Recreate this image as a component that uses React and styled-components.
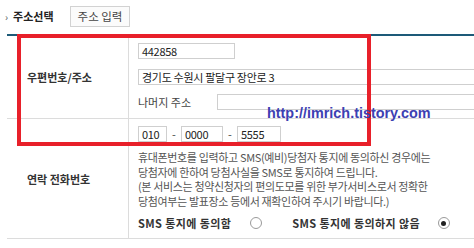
import React from "react";
import styled, { createGlobalStyle } from "styled-components";

const GlobalStyle = createGlobalStyle`
  html, body {
    margin: 0;
    padding: 0;
    background: #fff;
  }
  body {
    font-family: "Noto Sans CJK KR", "Liberation Sans", sans-serif;
    color: #333;
  }
`;

const KR = `"Noto Sans CJK KR", "Liberation Sans", sans-serif`;

const Page = styled.div`
  position: relative;
  width: 474px;
  height: 248px;
  overflow: hidden;
`;

const Header = styled.div`
  display: flex;
  align-items: center;
  height: 34px;
  padding-left: 5px;
  box-sizing: border-box;
  padding-bottom: 2px;
`;

const Title = styled.div`
  display: flex;
  align-items: center;
  font-family: ${KR};
  font-size: 11px;
  font-weight: 700;
  color: #222;
  width: 65px;
`;

const Chevron = styled.span`
  font-size: 10px;
  font-weight: 400;
  color: #555;
  margin-right: 5px;
`;

const SmallButton = styled.button`
  height: 21px;
  width: 60px;
  padding: 0;
  border: 1px solid #d2d2d2;
  background: #fbfbfb;
  font-family: ${KR};
  font-size: 11.5px;
  color: #444;
`;

const Table = styled.div`
  margin-left: 7px;
  border-top: 2px solid #1d5a78;
  display: grid;
  grid-template-columns: 122px 1fr;
`;

const Label = styled.div`
  display: flex;
  align-items: center;
  padding-left: 20px;
  border-right: 1px solid #dcdcdc;
  border-bottom: 1px solid #dcdcdc;
  font-family: ${KR};
  font-size: 11px;
  font-weight: 700;
  color: #333;
  height: ${(p) => p.h}px;
  box-sizing: border-box;
`;

const Cell = styled.div`
  border-bottom: 1px solid #dcdcdc;
  padding: ${(p) => p.pad};
  overflow: hidden;
  height: ${(p) => p.h}px;
  box-sizing: border-box;
`;

const Line = styled.div`
  display: flex;
  align-items: center;
  margin-top: ${(p) => p.mt || 0}px;
  white-space: nowrap;
`;

const Field = styled.div`
  flex: none;
  width: ${(p) => p.w}px;
  height: 16px;
  box-sizing: border-box;
  border: 1px solid #cfcfcf;
  background: #fff;
  padding: 0 3px;
  font-family: ${KR};
  font-size: 11px;
  letter-spacing: -0.3px;
  line-height: 14px;
  color: #222;
  white-space: nowrap;
  overflow: hidden;
`;

const FieldLabel = styled.span`
  flex: none;
  width: 79px;
  font-family: ${KR};
  font-size: 11px;
  color: #444;
`;

const Dash = styled.span`
  flex: none;
  width: 14px;
  text-align: center;
  font-size: 11px;
  color: #444;
`;

const Notice = styled.div`
  margin-top: 8px;
  font-family: ${KR};
  font-size: 11px;
  line-height: 14.5px;
  letter-spacing: -0.35px;
  color: #555;
  white-space: nowrap;
`;

const Agree = styled.div`
  display: flex;
  align-items: center;
  margin-top: 8px;
  height: 14px;
  white-space: nowrap;
`;

const AgreeText = styled.span`
  font-family: ${KR};
  font-size: 11px;
  font-weight: 700;
  color: #333;
  letter-spacing: 0.4px;
`;

const Radio = styled.span`
  flex: none;
  width: 10px;
  height: 10px;
  border-radius: 50%;
  border: 1px solid #9a9a9a;
  background: #fff;
  margin: 0 ${(p) => p.mr}px 0 ${(p) => p.ml}px;
  display: flex;
  align-items: center;
  justify-content: center;

  &::after {
    content: "";
    width: 5px;
    height: 5px;
    border-radius: 50%;
    background: ${(p) => (p.checked ? "#222" : "transparent")};
  }
`;

const Highlight = styled.div`
  position: absolute;
  left: 17px;
  top: 34px;
  width: 354px;
  height: 112px;
  border: 4px solid #e8202a;
  box-sizing: border-box;
  pointer-events: none;
`;

const Watermark = styled.div`
  position: absolute;
  left: 267px;
  top: 105px;
  font-family: "Liberation Sans", Arial, sans-serif;
  font-size: 14.4px;
  font-weight: 700;
  color: #3c40b2;
  white-space: nowrap;
`;

export default function App() {
  return (
    <>
      <GlobalStyle />
      <Page>
        <Header>
          <Title>
            <Chevron>›</Chevron>주소선택
          </Title>
          <SmallButton>주소 입력</SmallButton>
        </Header>

        <Table>
          <Label h={83}>우편번호/주소</Label>
          <Cell h={83} pad="7px 0 0 9px">
            <Line>
              <Field w={97}>442858</Field>
            </Line>
            <Line mt={10}>
              <Field w={360}>경기도 수원시 팔달구 장안로 3</Field>
            </Line>
            <Line mt={9}>
              <FieldLabel>나머지 주소</FieldLabel>
              <Field w={280} />
            </Line>
          </Cell>

          <Label h={120}>연락 전화번호</Label>
          <Cell h={120} pad="7px 0 0 9px">
            <Line>
              <Field w={29}>010</Field>
              <Dash>-</Dash>
              <Field w={42}>0000</Field>
              <Dash>-</Dash>
              <Field w={44}>5555</Field>
            </Line>
            <Notice>
              휴대폰번호를 입력하고 SMS(예비)당첨자 통지에 동의하신 경우에는
              <br />
              당첨자에 한하여 당첨사실을 SMS로 통지하여 드립니다.
              <br />
              (본 서비스는 청약신청자의 편의도모를 위한 부가서비스로서 정확한
              <br />
              당첨여부는 발표장소 등에서 재확인하여 주시기 바랍니다.)
            </Notice>
            <Agree>
              <AgreeText>SMS 통지에 동의함</AgreeText>
              <Radio ml={19} mr={30} />
              <AgreeText>SMS 통지에 동의하지 않음</AgreeText>
              <Radio ml={18} mr={0} checked />
            </Agree>
          </Cell>
        </Table>

        <Highlight />
        <Watermark>http://imrich.tistory.com</Watermark>
      </Page>
    </>
  );
}
